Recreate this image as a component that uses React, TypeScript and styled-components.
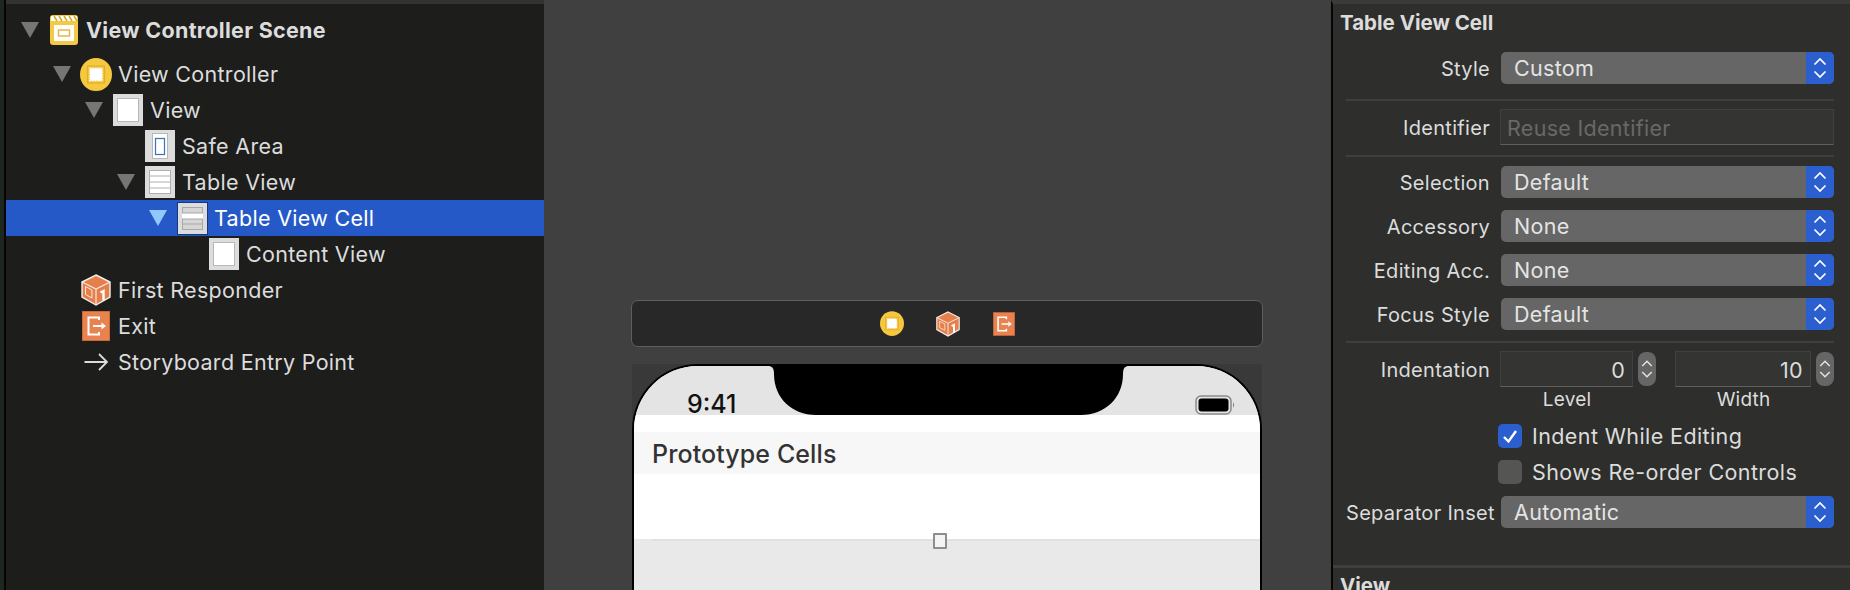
import styled, { createGlobalStyle } from "styled-components";

const GlobalStyle = createGlobalStyle`
  html, body {
    margin: 0;
    padding: 0;
    background: #404040;
    overflow: hidden;
  }
  * {
    box-sizing: border-box;
  }
`;

const Page = styled.div`
  display: flex;
  width: 1850px;
  height: 590px;
  overflow: hidden;
  font-family: Inter, "Liberation Sans", sans-serif;
  font-size: 21.5px;
  letter-spacing: 0.3px;
  color: #dcdcdc;
`;

const Gutter = styled.div`
  width: 6px;
  flex: none;
  background: #1d261f;
  border-right: 2px solid #050505;
`;

const Outline = styled.div`
  width: 538px;
  flex: none;
  background: #1d1e1c;
  border-top: 4px solid #333432;
  padding-top: 8px;
`;

const Row = styled.div<{ $level: number; $selected?: boolean }>`
  display: flex;
  align-items: center;
  height: 36px;
  padding-left: ${(p) => 15 + p.$level * 32}px;
  background: ${(p) => (p.$selected ? "#2559c8" : "transparent")};
  color: ${(p) => (p.$selected ? "#ffffff" : "#dcdcdc")};
`;

const SceneRow = styled(Row)`
  margin-bottom: 8px;
  font-weight: 700;
`;

const Disclosure = styled.span<{ $hidden?: boolean; $selected?: boolean }>`
  width: 18px;
  height: 16px;
  margin-right: 9px;
  flex: none;
  background: ${(p) =>
    p.$hidden ? "transparent" : p.$selected ? "#93c8ff" : "#767676"};
  clip-path: polygon(0 0, 100% 0, 50% 100%);
`;

const IconSlot = styled.span`
  display: flex;
  align-items: center;
  justify-content: center;
  width: 32px;
  height: 36px;
  flex: none;
`;

const RowLabel = styled.span`
  margin-left: 6px;
  white-space: nowrap;
`;

const Canvas = styled.div`
  flex: 1;
  display: flex;
  flex-direction: column;
  background: #404040;
  padding: 300px 0 0 87px;
`;

const Dock = styled.div`
  display: flex;
  align-items: center;
  justify-content: center;
  width: 632px;
  height: 47px;
  padding-left: 2px;
  flex: none;
  background: #282828;
  border: 1.5px solid #5e5e5e;
  border-radius: 7px;
`;

const DockSlot = styled.span`
  display: flex;
  align-items: center;
  justify-content: center;
  width: 56px;
`;

const PhoneBack = styled.div`
  width: 630px;
  margin: 17px 0 0 1px;
  flex: 1;
  background: #393939;
`;

const Phone = styled.div`
  position: relative;
  height: 100%;
  background: #e9e9e9;
  border: 2px solid #000;
  border-bottom: 0;
  border-radius: 66px 66px 0 0;
  overflow: hidden;
`;

const StatusBar = styled.div`
  display: flex;
  align-items: flex-start;
  height: 49px;
  background: #e4e4e4;
  color: #111;
`;

const Clock = styled.div`
  width: 134px;
  padding: 24px 0 0 53px;
  font-size: 25px;
  font-weight: 500;
  letter-spacing: 0;
  line-height: 28px;
`;

const BatterySlot = styled.div`
  margin-left: 66px;
  padding-top: 28px;
`;

const WhiteGap = styled.div<{ $height: number }>`
  height: ${(p) => p.$height}px;
  background: #fff;
`;

const SectionHeader = styled.div`
  display: flex;
  align-items: center;
  height: 42px;
  padding: 1px 0 0 18px;
  background: #f7f7f7;
  color: #333;
  font-size: 25px;
  font-weight: 500;
  letter-spacing: 0.1px;
`;

const CellLine = styled.div`
  height: 2px;
  margin-left: 18px;
  background: #e1e1e1;
`;

const Handle = styled.span`
  position: absolute;
  left: 299px;
  top: 167px;
  width: 14px;
  height: 16px;
  background: #f4f4f4;
  border: 2px solid #8d8d8d;
  border-radius: 1px;
`;

const Inspector = styled.div`
  width: 519px;
  flex: none;
  background: #2e2f2d;
  border-left: 2px solid #050505;
  border-top: 4px solid #3a3b39;
`;

const SectionTitle = styled.div<{ $top?: number }>`
  height: 38px;
  margin-top: ${(p) => p.$top ?? 0}px;
  padding: 3px 0 0 7px;
  font-size: 20.5px;
  letter-spacing: 0;
  line-height: 32px;
  font-weight: 700;
`;

const Form = styled.div`
  display: flex;
  flex-direction: column;
  padding: 10px 16px 0 13px;
`;

const FormRow = styled.div<{ $top?: number }>`
  display: grid;
  grid-template-columns: 144px 1fr;
  column-gap: 11px;
  align-items: center;
  margin-top: ${(p) => p.$top ?? 0}px;
`;

const Label = styled.span`
  padding-top: 1px;
  text-align: right;
  font-size: 20px;
  letter-spacing: 0.3px;
  white-space: nowrap;
`;

const Divider = styled.div<{ $top: number; $bottom: number }>`
  height: 2px;
  margin: ${(p) => p.$top}px 0 ${(p) => p.$bottom}px;
  background: #3f403e;
`;

const WideDivider = styled.div<{ $top: number }>`
  height: 3px;
  margin-top: ${(p) => p.$top}px;
  background: #3f403e;
`;

const Select = styled.div`
  display: flex;
  align-items: center;
  height: 32px;
  padding-left: 13px;
  background: #666666;
  border-radius: 5px;
  color: #e4e4e4;
  overflow: hidden;
`;

const SelectValue = styled.span`
  flex: 1;
`;

const SelectArrows = styled.span`
  display: flex;
  align-items: center;
  justify-content: center;
  width: 28px;
  height: 100%;
  background: #2b5fd0;
`;

const TextField = styled.div<{ $muted?: boolean; $right?: boolean }>`
  display: flex;
  align-items: center;
  justify-content: ${(p) => (p.$right ? "flex-end" : "flex-start")};
  height: 36px;
  margin-left: -1px;
  padding: 2px 7px 0 6px;
  background: #343533;
  border: 1px solid #40413f;
  border-bottom: 1px solid #5f605e;
  color: ${(p) => (p.$muted ? "#686967" : "#dcdcdc")};
`;

const PairGrid = styled.div`
  display: grid;
  grid-template-columns: 155px 158px;
  column-gap: 20px;
`;

const StepperField = styled.div`
  display: grid;
  grid-template-columns: 1fr 18px;
  column-gap: 5px;
  align-items: center;
`;

const Stepper = styled.span`
  display: flex;
  align-items: center;
  justify-content: center;
  height: 34px;
  background: #666666;
  border-radius: 8px;
`;

const Caption = styled.div`
  height: 24px;
  padding: 1px 23px 0 0;
  font-size: 19px;
  line-height: 24px;
  text-align: center;
  letter-spacing: 0.2px;
`;

const CheckRow = styled.div`
  display: flex;
  align-items: center;
  gap: 10px;
  height: 24px;
  letter-spacing: 0.4px;
  margin-left: -3px;
`;

const CheckBox = styled.span<{ $checked?: boolean }>`
  display: flex;
  align-items: center;
  justify-content: center;
  width: 24px;
  height: 24px;
  background: ${(p) => (p.$checked ? "#2b5fd0" : "#555654")};
  border-radius: 5px;
`;

const SceneIcon = () => (
  <svg width="28" height="30" viewBox="0 0 28 30">
    <rect width="28" height="30" rx="3" fill="#f5c945" />
    <rect x="1" y="1" width="26" height="5" fill="#fff" />
    <path d="M4 1l3 5M9 1l3 5M14 1l3 5M19 1l3 5M24 1l3 5" stroke="#d9a92e" strokeWidth="1.6" />
    <rect x="4" y="10" width="20" height="16" fill="#fff" />
    <rect x="8.5" y="15" width="11" height="6" fill="#fff" stroke="#e5b63a" strokeWidth="1.4" />
  </svg>
);

const ControllerIcon = ({ size = 32 }: { size?: number }) => (
  <svg width={size} height={size + 1} viewBox="0 0 32 33">
    <ellipse cx="16" cy="16.5" rx="16" ry="16.5" fill="#f6c83f" />
    <rect x="7.5" y="8" width="17" height="17" fill="none" stroke="#e0ae33" strokeWidth="1.2" />
    <rect x="10" y="10.5" width="12" height="12" fill="#fff" stroke="#fff" strokeWidth="1.4" strokeDasharray="1.5 1" />
  </svg>
);

const ViewIcon = () => (
  <svg width="30" height="32" viewBox="0 0 30 32">
    <rect width="30" height="32" fill="#dcdcdc" />
    <rect x="4.5" y="4.5" width="21" height="23" fill="#fff" stroke="#b8b8b8" />
  </svg>
);

const SafeAreaIcon = () => (
  <svg width="30" height="32" viewBox="0 0 30 32">
    <rect width="30" height="32" fill="#dcdcdc" />
    <rect x="7.5" y="3.5" width="15" height="25" fill="#fff" stroke="#b8b8b8" />
    <rect x="10.5" y="8.5" width="9" height="16" fill="#fff" stroke="#3b71b8" strokeWidth="1.2" />
  </svg>
);

const TableIcon = () => (
  <svg width="30" height="32" viewBox="0 0 30 32">
    <rect width="30" height="32" fill="#dcdcdc" />
    <rect x="4.5" y="4.5" width="21" height="23" fill="#fff" stroke="#b0b0b0" />
    <path d="M5 10h20M5 16h20M5 22h20" stroke="#b0b0b0" />
  </svg>
);

const CellIcon = () => (
  <svg width="31" height="33" viewBox="0 0 31 33">
    <rect x="0.5" y="0.5" width="30" height="32" fill="#dcdcdc" stroke="#18367e" />
    <rect x="5.5" y="5.5" width="20" height="22" fill="#d6d6d6" stroke="#a8a8a8" />
    <rect x="5" y="11" width="21" height="6" fill="#fff" />
    <path d="M5 11h21M5 17h21M5 22h21" stroke="#a8a8a8" />
  </svg>
);

const CubeIcon = ({ size = 30 }: { size?: number }) => (
  <svg width={size} height={size + 2} viewBox="0 0 30 32">
    <path d="M15 1L29 8V23L15 31L1 23V8Z" fill="#e57f4c" stroke="#f4f0ec" strokeWidth="1.4" />
    <path d="M1 8L15 15L29 8M15 15V31" fill="none" stroke="#f8e8de" strokeWidth="1.2" />
    <path d="M4.5 12.5L11 16V24L4.5 20.5Z" fill="none" stroke="#f8e8de" strokeWidth="1" />
    <path d="M19.5 18.5L22.5 17V26.5" fill="none" stroke="#fff" strokeWidth="2.4" />
  </svg>
);

const ExitIcon = ({ size = 28 }: { size?: number }) => (
  <svg width={size} height={size + 2} viewBox="0 0 28 30">
    <rect x="0.5" y="0.5" width="27" height="29" fill="#e8824f" stroke="#c86a3a" />
    <path d="M17 9V6.5H6.5V23.5H17V21" fill="none" stroke="#fff" strokeWidth="2" />
    <path d="M11 15H20" stroke="#fff" strokeWidth="2" />
    <path d="M19.5 11.5L24 15L19.5 18.5Z" fill="#fff" />
  </svg>
);

const ArrowIcon = () => (
  <svg width="24" height="20" viewBox="0 0 24 20">
    <path d="M0.5 10H23M15 2L23 10L15 18" fill="none" stroke="#dcdcdc" strokeWidth="1.8" />
  </svg>
);

const Chevrons = ({ width = 14, color = "#fff" }: { width?: number; color?: string }) => (
  <svg width={width} height="22" viewBox="0 0 14 22">
    <path d="M1.5 7.5L7 2L12.5 7.5M1.5 14.5L7 20L12.5 14.5" fill="none" stroke={color} strokeWidth="1.7" />
  </svg>
);

const Notch = () => (
  <svg width="361" height="49" viewBox="0 0 361 49">
    <path
      d="M0 0C4 0 6 2 6 8C6 32 24 49 48 49H313C337 49 355 32 355 8C355 2 357 0 361 0Z"
      fill="#000"
    />
  </svg>
);

const Battery = () => (
  <svg width="40" height="20" viewBox="0 0 40 20">
    <rect x="1" y="1" width="35" height="18" rx="5" fill="none" stroke="#8a8a8a" strokeWidth="1.5" />
    <rect x="3.5" y="3.5" width="30" height="13" rx="3" fill="#000" />
    <path d="M38 7.5C39.5 8 39.5 12 38 12.5Z" fill="#8a8a8a" />
  </svg>
);

const Check = () => (
  <svg width="16" height="15" viewBox="0 0 16 15">
    <path d="M2 8L6.5 12.5L14 2" fill="none" stroke="#fff" strokeWidth="2.4" />
  </svg>
);

const SelectControl = ({ value }: { value: string }) => (
  <Select>
    <SelectValue>{value}</SelectValue>
    <SelectArrows>
      <Chevrons />
    </SelectArrows>
  </Select>
);

const NumberField = ({ value }: { value: string }) => (
  <StepperField>
    <TextField $right>{value}</TextField>
    <Stepper>
      <Chevrons width={12} color="#e4e4e4" />
    </Stepper>
  </StepperField>
);

const App = () => {
  return (
    <Page>
      <GlobalStyle />
      <Gutter />
      <Outline>
        <SceneRow $level={0}>
          <Disclosure />
          <IconSlot>
            <SceneIcon />
          </IconSlot>
          <RowLabel>View Controller Scene</RowLabel>
        </SceneRow>
        <Row $level={1}>
          <Disclosure />
          <IconSlot>
            <ControllerIcon />
          </IconSlot>
          <RowLabel>View Controller</RowLabel>
        </Row>
        <Row $level={2}>
          <Disclosure />
          <IconSlot>
            <ViewIcon />
          </IconSlot>
          <RowLabel>View</RowLabel>
        </Row>
        <Row $level={3}>
          <Disclosure $hidden />
          <IconSlot>
            <SafeAreaIcon />
          </IconSlot>
          <RowLabel>Safe Area</RowLabel>
        </Row>
        <Row $level={3}>
          <Disclosure />
          <IconSlot>
            <TableIcon />
          </IconSlot>
          <RowLabel>Table View</RowLabel>
        </Row>
        <Row $level={4} $selected>
          <Disclosure $selected />
          <IconSlot>
            <CellIcon />
          </IconSlot>
          <RowLabel>Table View Cell</RowLabel>
        </Row>
        <Row $level={5}>
          <Disclosure $hidden />
          <IconSlot>
            <ViewIcon />
          </IconSlot>
          <RowLabel>Content View</RowLabel>
        </Row>
        <Row $level={1}>
          <Disclosure $hidden />
          <IconSlot>
            <CubeIcon />
          </IconSlot>
          <RowLabel>First Responder</RowLabel>
        </Row>
        <Row $level={1}>
          <Disclosure $hidden />
          <IconSlot>
            <ExitIcon />
          </IconSlot>
          <RowLabel>Exit</RowLabel>
        </Row>
        <Row $level={1}>
          <Disclosure $hidden />
          <IconSlot>
            <ArrowIcon />
          </IconSlot>
          <RowLabel>Storyboard Entry Point</RowLabel>
        </Row>
      </Outline>

      <Canvas>
        <Dock>
          <DockSlot>
            <ControllerIcon size={24} />
          </DockSlot>
          <DockSlot>
            <CubeIcon size={24} />
          </DockSlot>
          <DockSlot>
            <ExitIcon size={22} />
          </DockSlot>
        </Dock>
        <PhoneBack>
          <Phone>
            <StatusBar>
              <Clock>9:41</Clock>
              <Notch />
              <BatterySlot>
                <Battery />
              </BatterySlot>
            </StatusBar>
            <WhiteGap $height={17} />
            <SectionHeader>Prototype Cells</SectionHeader>
            <WhiteGap $height={65} />
            <CellLine />
            <Handle />
          </Phone>
        </PhoneBack>
      </Canvas>

      <Inspector>
        <SectionTitle>Table View Cell</SectionTitle>
        <Form>
          <FormRow>
            <Label>Style</Label>
            <SelectControl value="Custom" />
          </FormRow>
          <Divider $top={15} $bottom={8} />
          <FormRow>
            <Label>Identifier</Label>
            <TextField $muted>Reuse Identifier</TextField>
          </FormRow>
          <Divider $top={10} $bottom={9} />
          <FormRow>
            <Label>Selection</Label>
            <SelectControl value="Default" />
          </FormRow>
          <FormRow $top={12}>
            <Label>Accessory</Label>
            <SelectControl value="None" />
          </FormRow>
          <FormRow $top={12}>
            <Label>Editing Acc.</Label>
            <SelectControl value="None" />
          </FormRow>
          <FormRow $top={12}>
            <Label>Focus Style</Label>
            <SelectControl value="Default" />
          </FormRow>
          <Divider $top={11} $bottom={8} />
          <FormRow>
            <Label>Indentation</Label>
            <PairGrid>
              <NumberField value="0" />
              <NumberField value="10" />
            </PairGrid>
          </FormRow>
          <FormRow>
            <span />
            <PairGrid>
              <Caption>Level</Caption>
              <Caption>Width</Caption>
            </PairGrid>
          </FormRow>
          <FormRow $top={13}>
            <span />
            <CheckRow>
              <CheckBox $checked>
                <Check />
              </CheckBox>
              Indent While Editing
            </CheckRow>
          </FormRow>
          <FormRow $top={12}>
            <span />
            <CheckRow>
              <CheckBox />
              Shows Re-order Controls
            </CheckRow>
          </FormRow>
          <FormRow $top={12}>
            <Label>Separator Inset</Label>
            <SelectControl value="Automatic" />
          </FormRow>
        </Form>
        <WideDivider $top={37} />
        <SectionTitle $top={-1}>View</SectionTitle>
      </Inspector>
    </Page>
  );
};

export default App;
